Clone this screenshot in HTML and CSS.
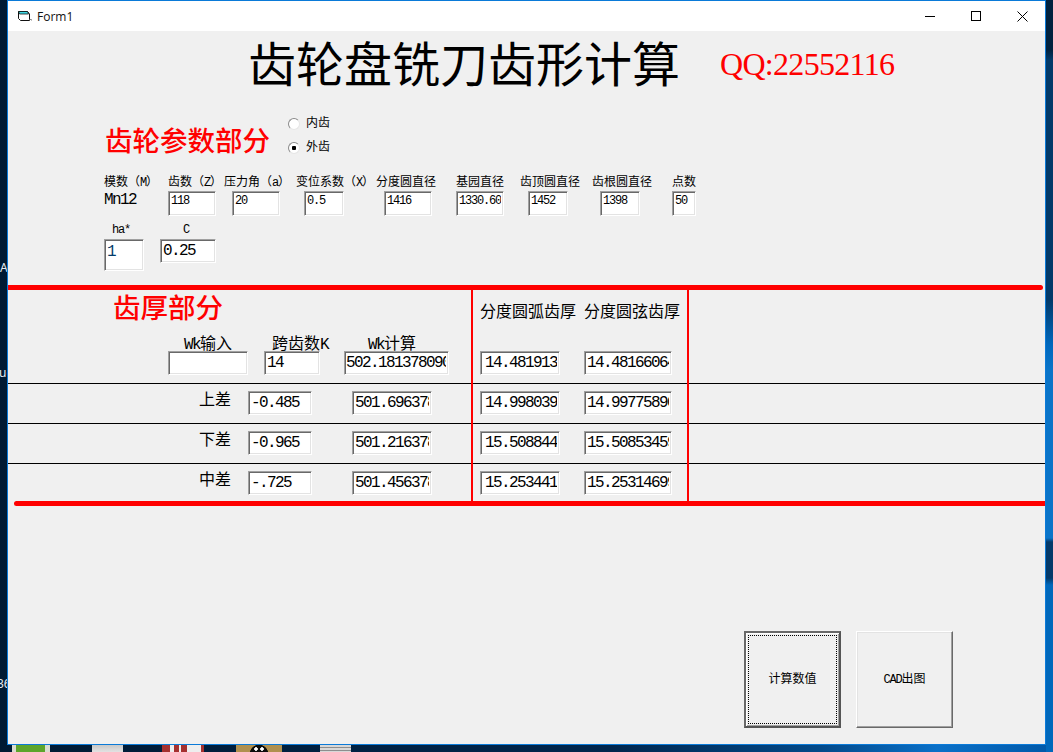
FILE: index.html
```html
<!DOCTYPE html>
<html lang="zh">
<head>
<meta charset="utf-8">
<title>Form1</title>
<link rel="stylesheet" href="styles.css">
</head>
<body>
<div class="desktop">
  <span class="peek peek-a">A</span>
  <span class="peek peek-ug">ug</span>
  <span class="peek peek-36">36</span>
  <div class="edge"></div>
  <div class="dock">
    <i class="tile tile-green"></i>
    <i class="tile tile-grey"></i>
    <i class="tile tile-red"></i>
    <i class="tile tile-tan"></i>
    <i class="tile tile-lines"></i>
  </div>
  <div class="window">
    <header class="titlebar">
      <svg class="app-icon" width="14" height="14" viewBox="0 0 14 14"><path d="M.5 2.5H9.5L11.5 5V11.5H2.5L.5 9.5Z" fill="#fff" stroke="#111"/><path d="M.5 2.5H9.5L10.5 5H1.5Z" fill="#3fd8e4" stroke="#111" stroke-width=".8"/><path d="M11.5 10.5H13.5V11.5" fill="none" stroke="#888"/></svg>
      <span class="app-name">Form1</span>
      <div class="caption-buttons">
        <span class="caption"><svg width="10" height="10" viewBox="0 0 10 10"><path d="M0 5.5H10" stroke="#000"/></svg></span>
        <span class="caption"><svg width="10" height="10" viewBox="0 0 10 10"><rect x=".5" y=".5" width="9" height="9" fill="none" stroke="#000"/></svg></span>
        <span class="caption"><svg width="11" height="11" viewBox="0 0 11 11"><path d="M.5 .5L10.5 10.5M10.5 .5L.5 10.5" stroke="#000"/></svg></span>
      </div>
    </header>
    <main class="form">
      <div class="title-row">
        <h1 class="main-title">齿轮盘铣刀齿形计算</h1>
        <span class="qq">QQ:22552116</span>
      </div>

      <div class="params-head">
        <h2 class="section-title">齿轮参数部分</h2>
        <div class="radios">
          <label class="radio"><input type="radio" name="kind"><span>内齿</span></label>
          <label class="radio"><input type="radio" name="kind" checked><span>外齿</span></label>
        </div>
      </div>

      <div class="params">
        <div class="param w64"><span class="cap">模数（<span class="lat">M</span>）</span><span class="module">Mn12</span></div>
        <div class="param w56"><span class="cap">齿数（<span class="lat">Z</span>）</span><input class="field small w-48" value="118"></div>
        <div class="param w72"><span class="cap">压力角（<span class="lat">a</span>）</span><input class="field small w-48 in8" value="20"></div>
        <div class="param w80"><span class="cap">变位系数（<span class="lat">X</span>）</span><input class="field small w-40 in8" value="0.5"></div>
        <div class="param w80"><span class="cap">分度圆直径</span><input class="field small w-48 in8" value="1416"></div>
        <div class="param w64"><span class="cap">基园直径</span><input class="field small w-48" value="1330.6040"></div>
        <div class="param w72"><span class="cap">齿顶圆直径</span><input class="field small w-40 in8" value="1452"></div>
        <div class="param w80"><span class="cap">齿根圆直径</span><input class="field small w-40 in8" value="1398"></div>
        <div class="param w24"><span class="cap">点数</span><input class="field small w-24" value="50"></div>
      </div>

      <div class="extras">
        <div class="extra extra-ha"><span class="cap"><span class="lat">ha*</span></span><input class="field tall w-40" value="1"></div>
        <div class="extra extra-c"><span class="cap"><span class="lat">C</span></span><input class="field w-56" value="0.25"></div>
      </div>

      <section class="thick">
        <div class="rule rule-top"></div>
        <div class="thick-head">
          <h2 class="section-title thick-title">齿厚部分</h2>
          <span class="col-title">分度圆弧齿厚</span>
          <span class="col-title">分度圆弦齿厚</span>
        </div>
        <div class="wk-labels">
          <span class="wk-label wk-in"><span class="lat-lg">Wk</span>输入</span>
          <span class="wk-label wk-k">跨齿数<span class="lat-lg">K</span></span>
          <span class="wk-label wk-calc"><span class="lat-lg">Wk</span>计算</span>
        </div>
        <div class="row row-first">
          <input class="field w-80 at-160" value="">
          <input class="field w-56 ml-16" value="14">
          <input class="field w-105 ml-24 tight" value="502.181378090">
          <input class="field w-80 ml-31 arc" value="14.48191313">
          <input class="field w-88 ml-24" value="14.48166064">
        </div>
        <div class="row">
          <span class="row-name">上差</span>
          <input class="field w-64 ml-17" value="-0.485">
          <input class="field w-80 ml-40" value="501.6963780">
          <input class="field w-80 ml-48 arc" value="14.99803930">
          <input class="field w-88 ml-24" value="14.99775890">
        </div>
        <div class="row">
          <span class="row-name">下差</span>
          <input class="field w-64 ml-17" value="-0.965">
          <input class="field w-80 ml-40" value="501.2163780">
          <input class="field w-80 ml-48 arc" value="15.50884460">
          <input class="field w-88 ml-24" value="15.50853459">
        </div>
        <div class="row row-last">
          <span class="row-name">中差</span>
          <input class="field w-64 ml-17" value="-.725">
          <input class="field w-80 ml-40" value="501.4563780">
          <input class="field w-80 ml-48 arc" value="15.25344190">
          <input class="field w-88 ml-24" value="15.25314699">
        </div>
        <div class="rule rule-bottom"></div>
        <div class="divider divider-a"></div>
        <div class="divider divider-b"></div>
      </section>

      <div class="actions">
        <button class="command is-default" type="button">计算数值</button>
        <button class="command" type="button"><span class="lat">CAD</span>出图</button>
      </div>
    </main>
  </div>
</div>
</body>
</html>
```
FILE: styles.css
```css
* { box-sizing: border-box; }
html, body { margin: 0; padding: 0; height: 100%; overflow: hidden; }
body { font-family: "Liberation Mono", "Noto Sans CJK SC", monospace; color: #000; }

.desktop {
  position: relative;
  width: 1053px;
  height: 752px;
  overflow: hidden;
  background: linear-gradient(90deg, #001a33 0%, #00264d 58%, #034a8a 78%, #0a70c8 89%, #0058a8 100%);
}
.peek { position: absolute; color: #e8eef4; font: 12px "Noto Sans", sans-serif; }
.peek-a { left: 0; top: 259px; }
.peek-ug { left: -1px; top: 364px; }
.peek-36 { left: -3px; top: 675px; }

.edge {
  position: absolute;
  left: 1046px;
  top: 0;
  width: 7px;
  height: 752px;
  background: linear-gradient(180deg, #01223f 0, #01223f 50px, #023a6a 60px, #023a6a 300px, #0068bd 345px, #0a74c8 370px, #0a74c8 538px, #043a6a 542px, #043a6a 578px, #0068bb 585px, #0068bb 100%);
}

.dock { position: absolute; left: 0; top: 745px; width: 400px; height: 7px; }
.tile { position: absolute; top: 0; height: 7px; display: block; }
.tile-green { left: 12px; width: 38px; background: linear-gradient(90deg, #d8dcd0 0 4px, #5da52b 4px 33px, #d8dcd0 33px); }
.tile-grey { left: 92px; width: 31px; background: linear-gradient(180deg, #c8c8c8, #e2e2e2); }
.tile-red { left: 162px; width: 42px; background: linear-gradient(90deg, #a5302f 0 8px, #eee 8px 12px, #a5302f 12px 17px, #eee 17px 19px, #a5302f 19px 25px, #eee 25px 39px, #a5302f 39px); }
.tile-tan {
  left: 236px;
  width: 46px;
  background:
    radial-gradient(circle at 20px 4px, #fff 0 1.5px, transparent 2px),
    radial-gradient(circle at 26px 4px, #fff 0 1.5px, transparent 2px),
    radial-gradient(circle at 23px 9px, #0c0c0c 0 9px, #b0904f 9.5px);
}
.tile-lines { left: 320px; width: 31px; background: repeating-linear-gradient(180deg, #d8d8d8 0 2px, #8e8e8e 2px 3px); }

.window {
  position: absolute;
  left: 7px;
  top: 0;
  width: 1039px;
  height: 745px;
  border: 1px solid #0a7ad8;
  display: flex;
  flex-direction: column;
  background: #f0f0f0;
}

.titlebar {
  height: 30px;
  flex: none;
  background: #fff;
  display: flex;
  align-items: center;
  padding-left: 10px;
}
.app-icon { flex: none; }
.app-name { margin-left: 5px; font: 12px "Open Sans", "Noto Sans", sans-serif; color: #111; }
.caption-buttons { margin-left: auto; display: flex; }
.caption { width: 46px; height: 30px; display: flex; align-items: center; justify-content: center; }

.form { flex: 1; min-height: 0; background: #f0f0f0; }

.title-row { height: 64px; display: flex; align-items: flex-start; padding-left: 240px; }
.main-title { margin: 0; font: 400 48px/60px "Noto Sans CJK SC", sans-serif; white-space: nowrap; }
.qq { margin-left: 40px; color: #f00; font: 32px/66px "Liberation Serif", serif; letter-spacing: -.7px; white-space: nowrap; }

.params-head { display: flex; height: 80px; padding: 27px 0 0 97px; }
.section-title { margin: 0; color: #f00; font: 500 27.5px/34px "Noto Sans CJK SC", sans-serif; white-space: nowrap; }
.radios { margin: 0 0 0 18px; display: flex; flex-direction: column; gap: 10px; position: relative; top: -5px; }
.radio { display: flex; align-items: center; height: 14px; font-size: 12px; line-height: 14px; }
.radio input {
  appearance: none;
  width: 12px;
  height: 12px;
  margin: 0 6px 0 0;
  border-radius: 50%;
  border: 1px solid #8a8a8a;
  border-right-color: #e6e6e6;
  border-bottom-color: #e6e6e6;
  background: #fff;
}
.radio input:checked { background: radial-gradient(circle, #000 0 2px, #fff 2.5px); }

.params { display: flex; padding-left: 96px; }
.param { display: flex; flex-direction: column; flex: none; }
.w24 { width: 24px; } .w56 { width: 56px; } .w64 { width: 64px; } .w72 { width: 72px; } .w80 { width: 80px; }
.cap { height: 16px; font-size: 12px; line-height: 16px; white-space: nowrap; }
.lat { letter-spacing: -1.2px; }
.lat-lg { letter-spacing: -1.6px; }
.module { font-size: 16px; line-height: 19px; letter-spacing: -1.6px; }

.field {
  display: block;
  flex: none;
  height: 24px;
  margin: 0;
  padding: 0 2px;
  font: 16px/20px "Liberation Mono", monospace;
  letter-spacing: -1.6px;
  color: #000;
  background: #fff;
  border: 1px solid;
  border-color: #a0a0a0 #fff #fff #a0a0a0;
  box-shadow: inset 1px 1px 0 #696969, inset -1px -1px 0 #e3e3e3;
  border-radius: 0;
  outline: none;
}
.field.small { height: 25px; padding-bottom: 6px; font-size: 12px; letter-spacing: -1.2px; }
.field.tall { height: 32px; padding-bottom: 6px; color: #023a6a; }
.field.arc { padding-left: 4px; }
.field.tight { padding-left: 1px; }
.in8 { margin-left: 8px; }
.w-24 { width: 24px; } .w-40 { width: 40px; } .w-48 { width: 48px; } .w-56 { width: 56px; }
.w-64 { width: 64px; } .w-80 { width: 80px; } .w-88 { width: 88px; } .w-105 { width: 105px; }

.extras { display: flex; padding: 7px 0 0 96px; height: 69px; }
.extra { display: flex; flex-direction: column; }
.extra-ha { width: 56px; }
.extra .cap { height: 16px; line-height: 14px; }
.extra-ha .cap { padding-left: 8px; }
.extra-c { width: 56px; }
.extra-c .cap { text-align: center; padding-right: 4px; }

.thick { position: relative; height: 221px; }
.rule { position: absolute; background: #f00; height: 5px; }
.rule-top { left: 0; right: 2px; top: 0; border-radius: 0 2.5px 2.5px 0; }
.rule-bottom { left: 6px; right: 0; top: 216px; border-radius: 2.5px 0 0 2.5px; }
.divider { position: absolute; top: 0; width: 2px; height: 218px; background: #f00; }
.divider-a { left: 463px; }
.divider-b { left: 679px; }

.thick-head { height: 50px; padding: 4px 0 0 105px; display: flex; align-items: flex-start; }
.thick-title { width: 367px; }
.col-title { width: 104px; margin-top: 9px; font: 16px/24px "Noto Sans CJK SC", sans-serif; white-space: nowrap; }
.wk-labels { height: 16px; position: relative; display: flex; }
.wk-label { position: absolute; top: -2px; font-size: 16px; line-height: 24px; white-space: nowrap; }
.wk-in { left: 176px; }
.wk-k { left: 264px; }
.wk-calc { left: 360px; }

.row { height: 40px; border-bottom: 1px solid #000; display: flex; align-items: flex-start; padding-top: 7px; }
.row-first { height: 33px; padding-top: 0; }
.row-last { height: 37px; border-bottom: 0; }
.row-name { width: 223px; text-align: right; font: 16px/24px "Noto Sans CJK SC", sans-serif; position: relative; top: -5px; }
.at-160 { margin-left: 160px; }
.ml-16 { margin-left: 16px; } .ml-17 { margin-left: 17px; } .ml-24 { margin-left: 24px; }
.ml-31 { margin-left: 31px; } .ml-40 { margin-left: 40px; } .ml-48 { margin-left: 48px; }

.actions { display: flex; gap: 15px; padding: 125px 0 0 736px; }
.command {
  width: 97px;
  height: 97px;
  padding: 0;
  background: #f0f0f0;
  font: 12px/14px "Liberation Mono", "Noto Sans CJK SC", sans-serif;
  color: #000;
  border: 1px solid;
  border-color: #fff #696969 #696969 #fff;
  box-shadow: inset -1px -1px 0 #a0a0a0, inset 1px 1px 0 #e3e3e3;
  border-radius: 0;
}
.command.is-default {
  border: 2px solid;
  border-color: #696969 #555 #555 #696969;
  box-shadow: inset 1px 1px 0 #fff, inset -1px -1px 0 #a0a0a0;
  outline: 1px dotted #000;
  outline-offset: -5px;
}
```
